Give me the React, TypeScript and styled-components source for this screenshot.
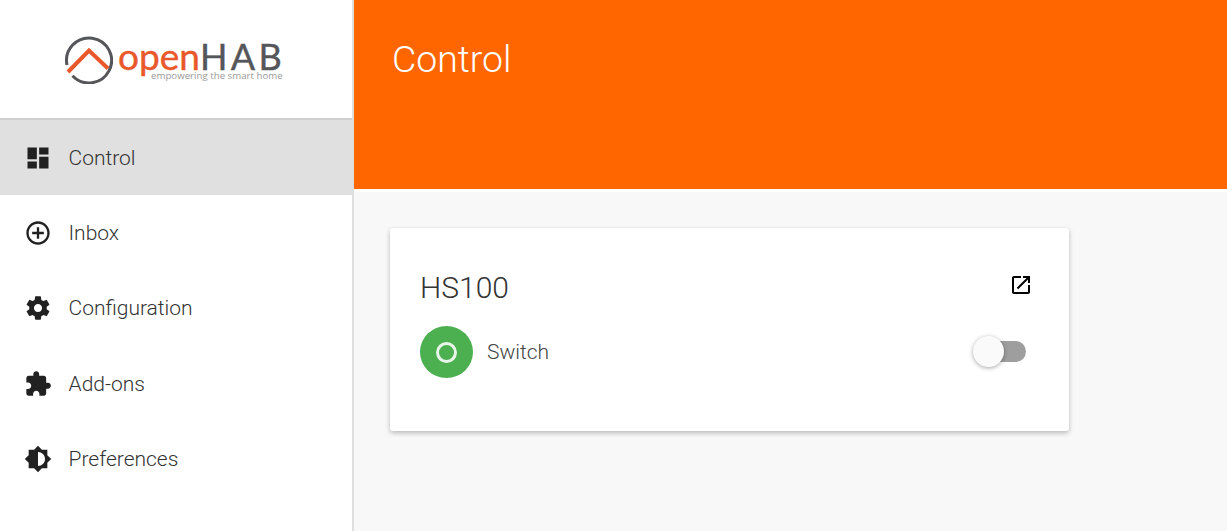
import React from "react";
import styled, { createGlobalStyle } from "styled-components";

const GlobalStyle = createGlobalStyle`
  html, body {
    margin: 0;
    height: 100%;
    overflow: hidden;
    background-color: #f8f8f8;
    font-family: Roboto, "Liberation Sans", sans-serif;
    font-weight: 300;
  }
`;

const Shell = styled.div`
  display: flex;
  height: 531px;
`;

const Sidebar = styled.aside`
  width: 352px;
  flex-shrink: 0;
  background-color: #fff;
  border-right: 2px solid #dedede;
`;

const LogoArea = styled.div`
  height: 82px;
  display: flex;
  align-items: flex-start;
  padding: 36px 0 0 65px;
  border-bottom: 2px solid #cfcfcf;
`;

const LogoWords = styled.div`
  margin-left: 5px;
  display: flex;
  flex-direction: column;
`;

const LogoName = styled.div`
  font-family: Lato, sans-serif;
  font-size: 37px;
  line-height: 30px;
  height: 30px;
  margin-top: 5px;
  font-weight: 400;
  color: #e9582a;
  -webkit-text-stroke: 0.4px #e9582a;

  span {
    font-size: 36px;
    letter-spacing: 3.4px;
    color: #55565a;
    -webkit-text-stroke: 0.4px #55565a;
  }
`;

const LogoTag = styled.div`
  font-family: "Open Sans", sans-serif;
  font-size: 9.7px;
  line-height: 10px;
  margin-left: 33px;
  font-weight: 400;
  color: #9a9a9a;
  white-space: nowrap;
`;

const NavList = styled.nav`
  display: flex;
  flex-direction: column;
`;

const NavRow = styled.div<{ $active?: boolean }>`
  height: 75.4px;
  display: flex;
  align-items: center;
  gap: 17px;
  padding-left: 23.5px;
  background-color: ${(p) => (p.$active ? "#e0e0e0" : "transparent")};
  color: #333;
  font-size: 21px;
`;

const Icon = styled.svg<{ $size: number }>`
  width: ${(p) => p.$size}px;
  height: ${(p) => p.$size}px;
  flex-shrink: 0;
  fill: #212121;
`;

const Main = styled.main`
  flex: 1;
  display: flex;
  flex-direction: column;
`;

const Header = styled.header`
  height: 189px;
  flex-shrink: 0;
  box-sizing: border-box;
  padding: 38px 38px 0;
  background-color: #ff6600;
  color: #fff;
  font-size: 37.4px;
  line-height: 43px;
`;

const Content = styled.div`
  flex: 1;
  padding: 36px;
  border-top: 3px solid #fff;
  box-sizing: border-box;
`;

const Card = styled.section`
  width: 679px;
  height: 203px;
  box-sizing: border-box;
  padding: 42px 30px 0;
  background-color: #fff;
  border-radius: 3px;
  box-shadow: 0 2px 5px rgba(0, 0, 0, 0.26);
`;

const CardTop = styled.div`
  display: flex;
  justify-content: space-between;
  align-items: flex-start;
  padding-right: 6px;
`;

const CardTitle = styled.h2`
  margin: 0;
  font-size: 30px;
  line-height: 36px;
  font-weight: 300;
  color: #333;
`;

const OpenLink = styled.a`
  display: flex;
  margin-top: 3px;
`;

const ItemRow = styled.div`
  margin-top: 20px;
  display: flex;
  align-items: center;
`;

const StatusDot = styled.div`
  width: 53px;
  height: 52px;
  border-radius: 50%;
  background-color: #4caf50;
  display: flex;
  align-items: center;
  justify-content: center;
`;

const StatusRing = styled.div`
  width: 21px;
  height: 21px;
  box-sizing: border-box;
  border: 3px solid #e8f5e9;
  border-radius: 50%;
`;

const ItemLabel = styled.span`
  margin-left: 14px;
  flex: 1;
  font-size: 21px;
  line-height: 24px;
  padding-bottom: 1px;
  color: #444;
`;

const SwitchTrack = styled.div`
  position: relative;
  width: 50px;
  height: 21px;
  border-radius: 11px;
  background-color: #9e9e9e;
  margin: 0 13px 2px 0;
`;

const SwitchThumb = styled.div`
  position: absolute;
  left: -3px;
  top: -5px;
  width: 31px;
  height: 31px;
  border-radius: 50%;
  background-color: #fafafa;
  box-shadow: 0 1px 4px rgba(0, 0, 0, 0.35);
`;

const navItems = [
  {
    label: "Control",
    path: "M3 13h8V3H3v10zm0 8h8v-6H3v6zm10 0h8V11h-8v10zm0-18v6h8V3h-8z",
  },
  {
    label: "Inbox",
    path: "M13 7h-2v4H7v2h4v4h2v-4h4v-2h-4V7zm-1-5C6.48 2 2 6.48 2 12s4.48 10 10 10 10-4.48 10-10S17.52 2 12 2zm0 18c-4.41 0-8-3.59-8-8s3.59-8 8-8 8 3.59 8 8-3.59 8-8 8z",
  },
  {
    label: "Configuration",
    path: "M19.43 12.98c.04-.32.07-.64.07-.98s-.03-.66-.07-.98l2.11-1.65c.19-.15.24-.42.12-.64l-2-3.46c-.12-.22-.39-.3-.61-.22l-2.49 1c-.52-.4-1.08-.73-1.69-.98l-.38-2.65C14.46 2.18 14.25 2 14 2h-4c-.25 0-.46.18-.49.42l-.38 2.65c-.61.25-1.17.59-1.69.98l-2.49-1c-.23-.09-.49 0-.61.22l-2 3.46c-.13.22-.07.49.12.64l2.11 1.65c-.04.32-.07.65-.07.98s.03.66.07.98l-2.11 1.65c-.19.15-.24.42-.12.64l2 3.46c.12.22.39.3.61.22l2.49-1c.52.4 1.08.73 1.69.98l.38 2.65c.03.24.24.42.49.42h4c.25 0 .46-.18.49-.42l.38-2.65c.61-.25 1.17-.59 1.69-.98l2.49 1c.23.09.49 0 .61-.22l2-3.46c.12-.22.07-.49-.12-.64l-2.11-1.65zM12 15.5c-1.93 0-3.5-1.57-3.5-3.5s1.57-3.5 3.5-3.5 3.5 1.57 3.5 3.5-1.57 3.5-3.5 3.5z",
  },
  {
    label: "Add-ons",
    path: "M20.5 11H19V7c0-1.1-.9-2-2-2h-4V3.5C13 2.12 11.88 1 10.5 1S8 2.12 8 3.5V5H4c-1.1 0-1.99.9-1.99 2v3.8H3.5c1.49 0 2.7 1.21 2.7 2.7s-1.21 2.7-2.7 2.7H2V20c0 1.1.9 2 2 2h3.8v-1.5c0-1.49 1.21-2.7 2.7-2.7 1.49 0 2.7 1.21 2.7 2.7V22H17c1.1 0 2-.9 2-2v-4h1.5c1.38 0 2.5-1.12 2.5-2.5S21.88 11 20.5 11z",
  },
  {
    label: "Preferences",
    path: "M20 15.31L23.31 12 20 8.69V4h-4.69L12 .69 8.69 4H4v4.69L.69 12 4 15.31V20h4.69L12 23.31 15.31 20H20v-4.69zM12 18V6c3.31 0 6 2.69 6 6s-2.69 6-6 6z",
  },
];

const LogoMark = () => (
  <svg width="48" height="48" viewBox="0 0 48 48" fill="none">
    <path
      d="M7.5 39.7A22.5 22.5 0 1 0 2 29"
      stroke="#55565a"
      strokeWidth="3"
    />
    <path d="M3 36L24 14.5 43 32.5" stroke="#e9582a" strokeWidth="4" />
  </svg>
);

const App: React.FC = () => {
  return (
    <>
      <GlobalStyle />
      <Shell>
        <Sidebar>
          <LogoArea>
            <LogoMark />
            <LogoWords>
              <LogoName>
                open<span>HAB</span>
              </LogoName>
              <LogoTag>empowering the smart home</LogoTag>
            </LogoWords>
          </LogoArea>
          <NavList>
            {navItems.map((item, i) => (
              <NavRow key={item.label} $active={i === 0}>
                <Icon $size={28} viewBox="0 0 24 24">
                  <path d={item.path} />
                </Icon>
                {item.label}
              </NavRow>
            ))}
          </NavList>
        </Sidebar>
        <Main>
          <Header>Control</Header>
          <Content>
            <Card>
              <CardTop>
                <CardTitle>HS100</CardTitle>
                <OpenLink>
                  <Icon $size={24} viewBox="0 0 24 24">
                    <path
                      fill="#000"
                      d="M19 19H5V5h7V3H5c-1.11 0-2 .9-2 2v14c0 1.1.89 2 2 2h14c1.1 0 2-.9 2-2v-7h-2v7zM14 3v2h3.59l-9.83 9.83 1.41 1.41L19 6.41V10h2V3h-7z"
                    />
                  </Icon>
                </OpenLink>
              </CardTop>
              <ItemRow>
                <StatusDot>
                  <StatusRing />
                </StatusDot>
                <ItemLabel>Switch</ItemLabel>
                <SwitchTrack>
                  <SwitchThumb />
                </SwitchTrack>
              </ItemRow>
            </Card>
          </Content>
        </Main>
      </Shell>
    </>
  );
};

export default App;
